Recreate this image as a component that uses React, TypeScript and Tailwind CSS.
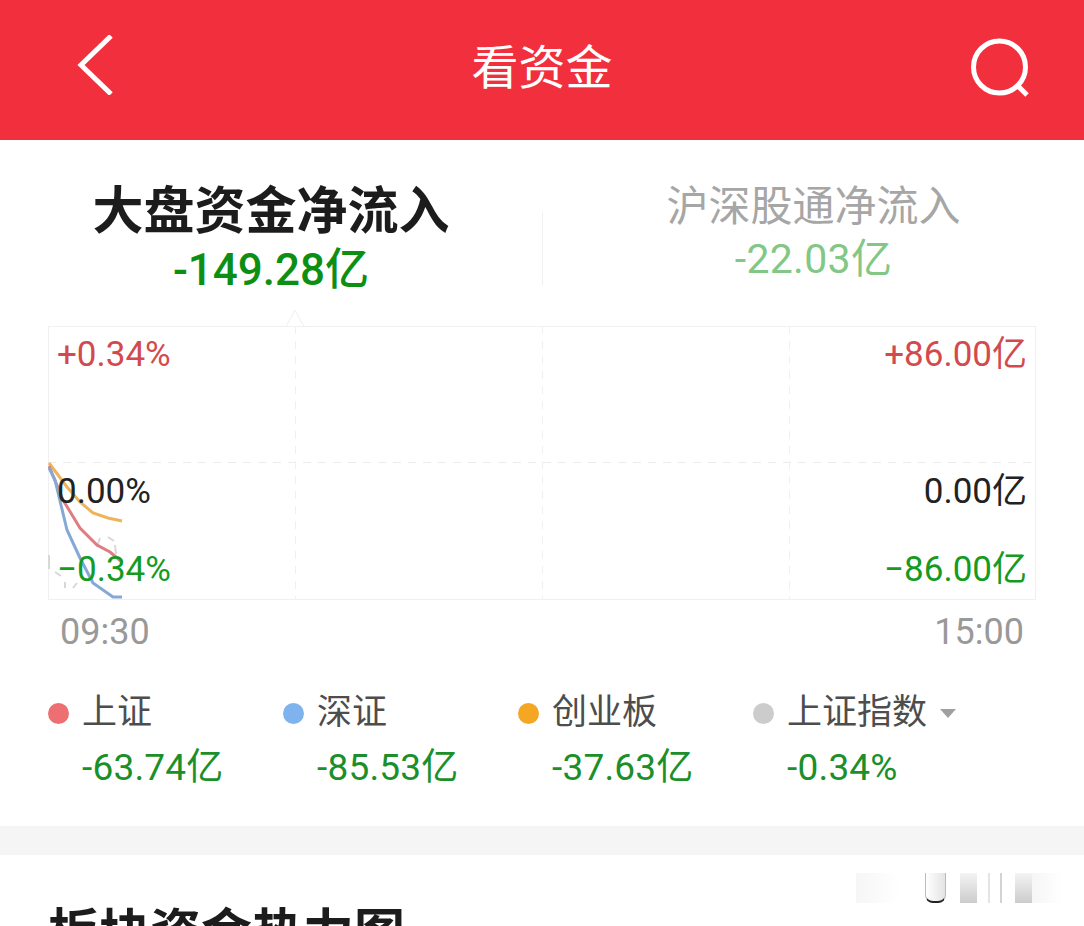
const cjk = "font-['Roboto','Noto_Sans_CJK_SC',sans-serif]";

const legend = [
  { name: "上证", value: "-63.74亿", dot: "bg-[#ee6f72]" },
  { name: "深证", value: "-85.53亿", dot: "bg-[#7fb3ee]" },
  { name: "创业板", value: "-37.63亿", dot: "bg-[#f5a623]" },
  { name: "上证指数", value: "-0.34%", dot: "bg-[#cccccc]", caret: true },
];

function Chart() {
  return (
    <div className="relative mx-[48px] h-[274px] w-[988px]">
      <svg className="absolute inset-0" width="988" height="274" fill="none">
        <rect x="0.5" y="0.5" width="987" height="273" stroke="#f0f0f0" />
        <path d="M0 136.5H987" stroke="#ececec" strokeDasharray="8 7" />
        <path d="M247.5 0V273M494.5 0V273M741.5 0V273" stroke="#f0f0f0" strokeDasharray="8 7" />
        {/* smudge behind the lower label */}
        <path d="M1 229v14M7 246l6 4M17 256v6M25 262l4-5M49 221l3-9M60 211l6 4M67 219l1 9" stroke="#d8d8d8" strokeWidth="2" />
        <polyline points="1,137 19,161 32,176 45,187 60,192 74,195" stroke="#eeb45c" strokeWidth="3" />
        <polyline points="1,140 15,174 32,202 49,219 62,226 74,236" stroke="#de7d83" strokeWidth="3" />
        <polyline points="1,142 7,154 19,204 32,232 45,257 65,271 74,271" stroke="#85a9d6" strokeWidth="3" />
      </svg>
      <svg className="absolute left-[232px] top-[-17px]" width="30" height="18" fill="none">
        <path d="M0 17.5H6L15 1L24 17.5H30" stroke="#eeeeee" />
      </svg>
      <div className={`absolute inset-0 flex justify-between px-[9px] pt-[8px] text-[35px] leading-[41px] ${cjk}`}>
        <div className="flex flex-col">
          <span className="text-[#d24a4e]">+0.34%</span>
          <span className="mt-[96px] text-[#222222]">0.00%</span>
          <span className="mt-[37px] text-[#159a22]">−0.34%</span>
        </div>
        <div className="flex flex-col text-right">
          <span className="text-[#d24a4e]">+86.00亿</span>
          <span className="mt-[96px] text-[#222222]">0.00亿</span>
          <span className="mt-[37px] text-[#159a22]">−86.00亿</span>
        </div>
      </div>
    </div>
  );
}

export default function App() {
  return (
    <div className={`relative h-[926px] w-[1084px] overflow-hidden bg-white ${cjk}`}>
      {/* Header */}
      <div className="flex h-[140px] items-center justify-between bg-[#f2303d] pb-[4px] pl-[76px] pr-[54px]">
        <svg className="mb-[6px]" width="38" height="60" viewBox="0 0 38 60" fill="none" stroke="#fff" strokeWidth="5">
          <path d="M35 1L5 30L35 59" />
        </svg>
        <span className="text-[47px] leading-[56px] text-white">看资金</span>
        <svg width="60" height="60" viewBox="0 0 60 60" fill="none" stroke="#fff" strokeWidth="5">
          <circle cx="29.5" cy="29" r="26" />
          <path d="M46 46L57 57" />
        </svg>
      </div>

      {/* Tabs */}
      <div className="flex h-[186px]">
        <div className="flex w-[542px] flex-col items-center pt-[40px]">
          <span className="text-[51px] font-bold leading-[64px] text-[#1c1c1c]">大盘资金净流入</span>
          <span className="mt-[-2px] text-[44px] font-medium leading-[56px] text-[#0c8f12]">-149.28亿</span>
        </div>
        <div className="mt-[72px] h-[73px] w-px bg-[#f0f0f0]" />
        <div className="flex flex-1 flex-col items-center pt-[40px]">
          <span className="text-[42px] leading-[54px] text-[#a6a6a6]">沪深股通净流入</span>
          <span className="mt-[-1px] text-[41px] leading-[52px] tracking-[0.3px] text-[#82c785]">-22.03亿</span>
        </div>
      </div>

      <Chart />

      {/* Time axis */}
      <div className="flex justify-between pl-[60px] pr-[60px] pt-[11px] text-[36px] leading-[42px] text-[#999999]">
        <span>09:30</span>
        <span>15:00</span>
      </div>

      {/* Legend */}
      <div className="flex h-[173px] pl-[48px] pt-[34px]">
        {legend.map((item) => (
          <div key={item.name} className="w-[235px]">
            <div className="flex items-center">
              <span className={`h-[21px] w-[21px] rounded-full ${item.dot}`} />
              <span className="ml-[13px] text-[35px] leading-[52px] text-[#4d4d4d]">{item.name}</span>
              {item.caret && (
                <svg className="ml-[13px]" width="16" height="9" fill="#a0a0a0">
                  <path d="M0 0H16L8 9Z" />
                </svg>
              )}
            </div>
            <div className="ml-[34px] mt-[3px] text-[37px] leading-[52px] tracking-[0.2px] text-[#1a8f2a]">{item.value}</div>
          </div>
        ))}
      </div>

      <div className="h-[29px] bg-[#f5f5f5]" />

      {/* Next section */}
      <div className="relative pl-[48px] pt-[49px]">
        <div className="text-[51px] font-bold leading-[60px] text-[#1c1c1c]">板块资金热力图</div>
        <div className="absolute left-[856px] top-[18px] flex h-[30px] w-[208px] items-end">
          <div className="h-full w-[44px] bg-gradient-to-r from-[#f6f6f6] to-white" />
          <div className="ml-[25px] h-full w-[21px] rounded-b-lg border-x border-b-2 border-x-[#bbbbbb] border-b-[#222222] bg-gradient-to-r from-white to-[#e4e4e4]" />
          <div className="ml-[14px] h-full w-[17px] bg-gradient-to-b from-[#f4f4f4] to-[#cccccc]" />
          <div className="ml-[11px] h-full w-[2px] bg-[#e4e4e4]" />
          <div className="ml-[10px] h-full w-[2px] bg-[#d4d4d4]" />
          <div className="ml-[13px] h-full w-[17px] bg-gradient-to-b from-[#f4f4f4] to-[#cccccc]" />
          <div className="h-full w-[31px] bg-gradient-to-r from-[#f6f6f6] to-white" />
        </div>
      </div>
    </div>
  );
}
